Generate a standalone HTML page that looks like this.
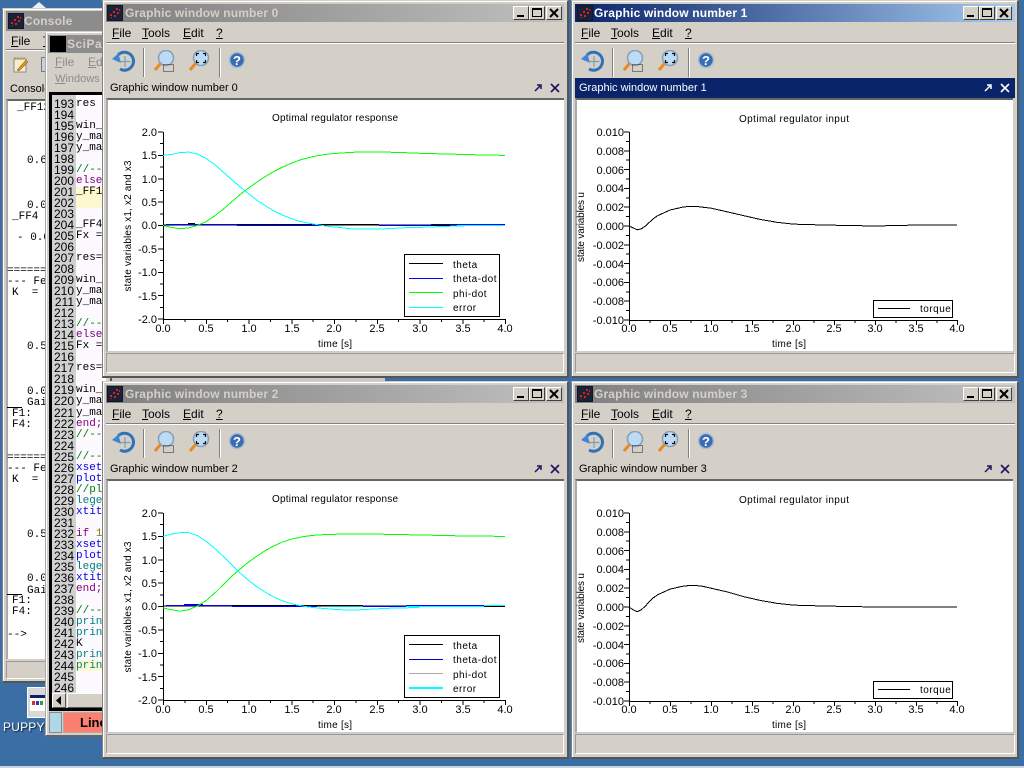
<!DOCTYPE html>
<html><head><meta charset="utf-8"><style>
html,body{margin:0;padding:0;width:1024px;height:768px;overflow:hidden;background:#3a6ea5}
*{box-sizing:border-box}
body{position:relative;font-family:"Liberation Sans",sans-serif;font-size:12px;color:#000}
.a{position:absolute;white-space:pre}
.w{position:absolute;background:#d4d0c8;border-top:1px solid #d4d0c8;border-left:1px solid #808080;border-right:2px solid #555;border-bottom:2px solid #555;box-shadow:inset 1px 1px 0 #fff}
.t{position:absolute;left:3px;top:3px;height:18px;background:linear-gradient(90deg,#808080,#c0c0c0)}
.t.on{background:linear-gradient(90deg,#0a246a,#a6caf0)}
.tt{position:absolute;left:19px;top:2px;font:bold 12px "Liberation Sans",sans-serif;letter-spacing:.15px;color:#d4d0c8;white-space:pre}
.on .tt{color:#fff}
.b{position:absolute;top:2px;width:16px;height:14px;background:#d4d0c8;border:1px solid;border-color:#fff #404040 #404040 #fff}
.m{position:absolute;top:25px;font-size:12px;white-space:pre}
.m u{text-decoration:underline}
.s1{position:absolute;top:41px;height:2px;background:linear-gradient(#808080 50%,#fff 50%)}
.s2{position:absolute;top:47px;width:2px;height:29px;background:linear-gradient(90deg,#808080 50%,#fff 50%)}
.d{position:absolute;left:3px;top:77px;height:20px;font-size:11px;line-height:20px;padding-left:4px;white-space:pre}
.d.on{background:#0a246a;color:#fff}
.c{position:absolute;left:3px;top:97px;height:254px;background:#fff;border-top:2px solid #666;border-left:2px solid #aaa;border-bottom:1px solid #ccc}
.st{position:absolute;left:3px;top:352px;height:20px;border:1px solid;border-color:#999 #fff #fff #999}
.n{position:absolute;left:52px;width:24px;text-align:right;padding-right:2px;font:12px/11px "Liberation Sans",sans-serif;height:11px;margin-top:2px}
.l{position:absolute;left:76px;font:11px/11px "Liberation Mono",monospace;height:11px;white-space:pre;margin-top:2px}
.n[style^="top:4"],.n[style^="top:5"],.n[style^="top:6"],.l[style^="top:4"],.l[style^="top:5"],.l[style^="top:6"]{margin-top:3px}
.o{position:absolute;left:0;font:11px/11px "Liberation Mono",monospace;white-space:pre}
svg text{font-family:"Liberation Sans",sans-serif}
</style></head><body>
<svg width="0" height="0" style="position:absolute"><defs>
<symbol id="ic" viewBox="0 0 16 16"><rect width="16" height="16" fill="#101828"/><rect x="1" y="1" width="14" height="14" fill="#1a2238"/><g fill="#e02020"><rect x="3" y="9" width="2" height="2"/><rect x="6" y="6" width="2" height="2"/><rect x="9" y="3" width="2" height="2"/><rect x="7" y="10" width="2" height="2"/><rect x="10" y="7" width="2" height="2"/><rect x="12" y="4" width="1" height="2"/><rect x="4" y="12" width="1" height="1"/></g></symbol>
<symbol id="undo" viewBox="0 0 24 22"><path d="M7 5A9 9 0 1 1 9 19" fill="none" stroke="#2f72b8" stroke-width="3"/><path d="M1 9L9 2L8 6L10 13Z" fill="#3c86d8"/><path d="M14 6V17M8.5 11.5H19.5" stroke="#7f9fb0" stroke-width="1.2"/></symbol>
<symbol id="z1" viewBox="0 0 24 24"><circle cx="13" cy="8" r="7.5" fill="#bcdcf6" stroke="#8aa0b8" stroke-width="1.6"/><path d="M7.5 13.5L2 20" stroke="#e88a20" stroke-width="3"/><rect x="10.5" y="14.5" width="10" height="7" fill="none" stroke="#222" stroke-dasharray="1 1"/></symbol>
<symbol id="z2" viewBox="0 0 24 24"><circle cx="13" cy="8" r="7.5" fill="#bcdcf6" stroke="#8aa0b8" stroke-width="1.6"/><path d="M7.5 13.5L2 20" stroke="#e88a20" stroke-width="3"/><path d="M8.5 6V3.5H11M15 3.5H17.5V6M17.5 10V12.5H15M11 12.5H8.5V10" fill="none" stroke="#111" stroke-width="1.2"/></symbol>
<symbol id="hp" viewBox="0 0 18 18"><circle cx="9" cy="9" r="7.5" fill="#3a6cb0" stroke="#a8bcd8" stroke-width="1.6"/><text x="9" y="14" text-anchor="middle" font-size="13" font-weight="bold" fill="#fff">?</text></symbol>
<symbol id="note" viewBox="0 0 16 16"><rect x="1" y="2" width="12" height="13" fill="#f6eec8" stroke="#888"/><path d="M2 2V0M5 2V0M8 2V0M11 2V0" stroke="#c08020"/><path d="M4 13L13 3L15 5L6 14Z" fill="#d89020" stroke="#705010" stroke-width=".5"/></symbol>
</defs></svg>

<!-- desktop bits -->
<div class="a" style="left:0;top:766px;width:1024px;height:2px;background:#cdd4dc"></div>
<svg class="a" style="left:31px;top:1px" width="16" height="8"><path d="M8 1L15 7H1Z" fill="#e8f0f8"/></svg>
<div class="a" style="left:102px;top:377px;width:283px;height:4px;background:#c8c8c8"></div>
<div class="a" style="left:27px;top:687px;width:20px;height:31px;background:#d8d8d4;border:1px solid #fff"></div>
<div class="a" style="left:30px;top:695px;width:16px;height:16px;background:linear-gradient(#0a246a 20%,#fff 20%)"></div>
<div class="a" style="left:32px;top:701px;width:3px;height:4px;background:#d03030"></div>
<div class="a" style="left:36px;top:701px;width:3px;height:4px;background:#3030d0"></div>
<div class="a" style="left:40px;top:701px;width:3px;height:4px;background:#30a030"></div>
<div class="a" style="left:3px;top:720px;font-size:12px;color:#fff;letter-spacing:.2px;text-shadow:1px 1px 1px #123">PUPPY2</div>

<!-- console -->
<div class="w" style="left:2px;top:8px;width:110px;height:675px">
 <div class="t" style="width:100px;top:2px;height:20px;background:#8c8c8c"></div>
 <svg class="a" style="left:5px;top:4px" width="16" height="16"><use href="#ic"/></svg>
 <div class="a" style="left:21px;top:5px;font:bold 12px 'Liberation Sans',sans-serif;letter-spacing:.15px;color:#d4d0c8">Console</div>
 <div class="m" style="left:8px;top:25px"><u>F</u>ile</div>
 <div class="m" style="left:40px;top:25px"><u>T</u>ools</div>
 <div class="s1" style="left:3px;width:100px;top:40px"></div>
 <svg class="a" style="left:10px;top:48px" width="16" height="16"><use href="#note"/></svg>
 <div class="a" style="left:38px;top:48px;width:10px;height:15px;background:#c8d0e0;border:1px solid #778"></div>
 <div class="a" style="left:7px;top:74px;font-size:11px">Console</div>
 <div class="a" style="left:3px;top:90px;width:100px;height:560px;background:#fff;border-top:2px solid #666;border-left:2px solid #aaa"></div>
 <div class="a" style="left:3px;top:652px;width:100px;height:18px;border:1px solid;border-color:#999 #fff #fff #999"></div>
</div>
<div class="o" style="left:17px;top:103px">_FF123</div>
<div class="o" style="left:27px;top:156px">0.62</div>
<div class="o" style="left:27px;top:201px">0.00</div>
<div class="o" style="left:12px;top:212px">_FF4  =</div>
<div class="o" style="left:17px;top:233px">- 0.00</div>
<div class="o" style="left:7px;top:266px">==========</div>
<div class="o" style="left:7px;top:277px">--- Feed</div>
<div class="o" style="left:12px;top:288px">K  =</div>
<div class="o" style="left:27px;top:342px">0.56</div>
<div class="o" style="left:27px;top:387px">0.00</div>
<div class="o" style="left:27px;top:398px">Gain</div>
<div class="a" style="left:7px;top:407px;width:15px;height:1px;background:#000"></div>
<div class="o" style="left:12px;top:409px">F1:</div>
<div class="o" style="left:12px;top:420px">F4:   -</div>
<div class="o" style="left:7px;top:453px">==========</div>
<div class="o" style="left:7px;top:464px">--- Feed</div>
<div class="o" style="left:12px;top:475px">K  =</div>
<div class="o" style="left:27px;top:530px">0.56</div>
<div class="o" style="left:27px;top:574px">0.00</div>
<div class="o" style="left:27px;top:586px">Gain</div>
<div class="a" style="left:7px;top:594px;width:15px;height:1px;background:#000"></div>
<div class="o" style="left:12px;top:596px">F1:</div>
<div class="o" style="left:12px;top:607px">F4:   -</div>
<div class="o" style="left:7px;top:630px">--&gt;</div>

<!-- scipad -->
<div class="a" style="left:45px;top:32px;width:60px;height:705px;background:#d4d0c8;border-left:1px solid #aaa;border-top:1px solid #fff;border-bottom:2px solid #666;box-shadow:inset 1px 0 0 #fff"></div>
<div class="a" style="left:48px;top:35px;width:57px;height:18px;background:#8c8c8c"></div>
<div class="a" style="left:50px;top:36px;width:16px;height:16px;background:#000"></div>
<div class="a" style="left:67px;top:37px;font:bold 12px 'Liberation Sans',sans-serif;letter-spacing:.5px;color:#d4d0c8">SciPad</div>
<div class="a" style="left:55px;top:55px;color:#8c8c8c"><u>F</u>ile</div>
<div class="a" style="left:88px;top:55px;color:#8c8c8c"><u>E</u>dit</div>
<div class="a" style="left:55px;top:73px;color:#8c8c8c;font-size:11px"><u>W</u>indows</div>
<div class="a" style="left:49px;top:92px;width:56px;height:619px;background:#000"></div>
<div class="a" style="left:52px;top:95px;width:24px;height:598px;background:#d0d0d0"></div>
<div class="a" style="left:76px;top:95px;width:29px;height:598px;background:#fdfaff"></div>
<div class="a" style="left:76px;top:187px;width:29px;height:21px;background:#fdf8d0"></div>
<div class="a" style="left:76px;top:660px;width:29px;height:11px;background:#fdf8d0"></div>
<div class="a" style="left:52px;top:693px;width:53px;height:15px;background:#d4d0c8"></div>
<div class="a" style="left:52px;top:693px;width:14px;height:15px;background:#d4d0c8;border:1px solid;border-color:#fff #555 #555 #fff"></div>
<svg class="a" style="left:55px;top:696px" width="8" height="10"><path d="M6 0V9L1 4.5Z" fill="#000"/></svg>
<div class="a" style="left:67px;top:693px;width:38px;height:15px;border:1px solid;border-color:#fff #555 #555 #fff"></div>
<div class="a" style="left:49px;top:712px;width:13px;height:21px;background:#add8e6;border:1px solid #889"></div>
<div class="a" style="left:63px;top:712px;width:42px;height:21px;background:#fa8072;border:1px solid #b8a8a0"></div>
<div class="a" style="left:80px;top:715px;font:bold 13px 'Liberation Sans',sans-serif">Line</div>
<div class="n" style="top:97px">193</div><div class="l" style="top:97px">res =</div>
<div class="n" style="top:108px">194</div>
<div class="n" style="top:119px">195</div><div class="l" style="top:119px">win_m</div>
<div class="n" style="top:130px">196</div><div class="l" style="top:130px">y_max</div>
<div class="n" style="top:141px">197</div><div class="l" style="top:141px">y_max</div>
<div class="n" style="top:152px">198</div>
<div class="n" style="top:163px">199</div><div class="l" style="top:163px;color:#008000">//---</div>
<div class="n" style="top:174px">200</div><div class="l" style="top:174px;color:#800080">else</div>
<div class="n" style="top:185px">201</div><div class="l" style="top:185px">_FF12</div>
<div class="n" style="top:196px">202</div>
<div class="n" style="top:207px">203</div>
<div class="n" style="top:218px">204</div><div class="l" style="top:218px">_FF4</div>
<div class="n" style="top:229px">205</div><div class="l" style="top:229px">Fx =</div>
<div class="n" style="top:240px">206</div>
<div class="n" style="top:251px">207</div><div class="l" style="top:251px">res=</div>
<div class="n" style="top:262px">208</div>
<div class="n" style="top:273px">209</div><div class="l" style="top:273px">win_m</div>
<div class="n" style="top:284px">210</div><div class="l" style="top:284px">y_max</div>
<div class="n" style="top:295px">211</div><div class="l" style="top:295px">y_max</div>
<div class="n" style="top:306px">212</div>
<div class="n" style="top:317px">213</div><div class="l" style="top:317px;color:#008000">//---</div>
<div class="n" style="top:328px">214</div><div class="l" style="top:328px;color:#800080">else</div>
<div class="n" style="top:339px">215</div><div class="l" style="top:339px">Fx =</div>
<div class="n" style="top:350px">216</div>
<div class="n" style="top:361px">217</div><div class="l" style="top:361px">res=</div>
<div class="n" style="top:372px">218</div>
<div class="n" style="top:383px">219</div><div class="l" style="top:383px">win_m</div>
<div class="n" style="top:394px">220</div><div class="l" style="top:394px">y_max</div>
<div class="n" style="top:405px">221</div><div class="l" style="top:405px">y_max</div>
<div class="n" style="top:416px">222</div><div class="l" style="top:416px;color:#800080">end;</div>
<div class="n" style="top:427px">223</div><div class="l" style="top:427px;color:#008000">//---</div>
<div class="n" style="top:438px">224</div>
<div class="n" style="top:449px">225</div><div class="l" style="top:449px;color:#008000">//---</div>
<div class="n" style="top:460px">226</div><div class="l" style="top:460px;color:#0000e0">xset</div>
<div class="n" style="top:471px">227</div><div class="l" style="top:471px;color:#0000e0">plot2</div>
<div class="n" style="top:482px">228</div><div class="l" style="top:482px;color:#008000">//plo</div>
<div class="n" style="top:493px">229</div><div class="l" style="top:493px;color:#008080">legen</div>
<div class="n" style="top:504px">230</div><div class="l" style="top:504px;color:#0000e0">xtit</div>
<div class="n" style="top:515px">231</div>
<div class="n" style="top:526px">232</div><div class="l" style="top:526px;color:#800080">if <span style="color:#808000">1</span></div>
<div class="n" style="top:537px">233</div><div class="l" style="top:537px;color:#0000e0">xset</div>
<div class="n" style="top:548px">234</div><div class="l" style="top:548px;color:#0000e0">plot2</div>
<div class="n" style="top:559px">235</div><div class="l" style="top:559px;color:#008080">legen</div>
<div class="n" style="top:570px">236</div><div class="l" style="top:570px;color:#0000e0">xtit</div>
<div class="n" style="top:581px">237</div><div class="l" style="top:581px;color:#800080">end;</div>
<div class="n" style="top:592px">238</div>
<div class="n" style="top:603px">239</div><div class="l" style="top:603px;color:#008000">//---</div>
<div class="n" style="top:614px">240</div><div class="l" style="top:614px;color:#008080">print</div>
<div class="n" style="top:625px">241</div><div class="l" style="top:625px;color:#008080">print</div>
<div class="n" style="top:636px">242</div><div class="l" style="top:636px">K</div>
<div class="n" style="top:647px">243</div><div class="l" style="top:647px;color:#008080">print</div>
<div class="n" style="top:658px">244</div><div class="l" style="top:658px;color:#008080">print</div>
<div class="n" style="top:669px">245</div>
<div class="n" style="top:680px">246</div>

<!-- window 0 -->
<div class="w" style="left:102px;top:0;width:467px;height:378px">
 <div class="t" style="width:458px"><div class="tt">Graphic window number 0</div>
  <div class="b" style="left:407px"><div class="a" style="left:3px;top:8px;width:7px;height:2px;background:#000"></div></div>
  <div class="b" style="left:423px"><div class="a" style="left:2px;top:1px;width:10px;height:9px;border:1px solid #000;border-top-width:2px"></div></div>
  <div class="b" style="left:440px"><svg class="a" style="left:2px;top:1px" width="10" height="10"><path d="M1 1L9 9M9 1L1 9" stroke="#000" stroke-width="2"/></svg></div>
 </div>
 <div class="m" style="left:9px"><u>F</u>ile</div><div class="m" style="left:39px"><u>T</u>ools</div><div class="m" style="left:80px"><u>E</u>dit</div><div class="m" style="left:113px"><u>?</u></div>
 <div class="s1" style="left:3px;width:458px"></div>
 <svg class="a" style="left:8px;top:49px" width="24" height="22"><use href="#undo"/></svg>
 <div class="s2" style="left:40px"></div><div class="s2" style="left:116px"></div>
 <svg class="a" style="left:50px;top:49px" width="24" height="24"><use href="#z1"/></svg>
 <svg class="a" style="left:85px;top:49px" width="24" height="24"><use href="#z2"/></svg>
 <svg class="a" style="left:125px;top:50px" width="18" height="18"><use href="#hp"/></svg>
 <div class="d" style="width:458px">Graphic window number 0<svg class="a" style="left:427px;top:5px" width="28" height="10"><path d="M2 8L7 3M4 2H8V6" stroke="#201060" stroke-width="1.5" fill="none"/><path d="M18 1L26 9M26 1L18 9" stroke="#201060" stroke-width="1.6"/></svg></div>
 <div class="c" style="width:458px"></div>
 <div class="st" style="width:458px"></div>
</div>
<!-- window 1 -->
<div class="w" style="left:571px;top:0;width:448px;height:378px">
 <div class="t on" style="width:440px"><div class="tt">Graphic window number 1</div>
  <div class="b" style="left:388px"><div class="a" style="left:3px;top:8px;width:7px;height:2px;background:#000"></div></div>
  <div class="b" style="left:404px"><div class="a" style="left:2px;top:1px;width:10px;height:9px;border:1px solid #000;border-top-width:2px"></div></div>
  <div class="b" style="left:421px"><svg class="a" style="left:2px;top:1px" width="10" height="10"><path d="M1 1L9 9M9 1L1 9" stroke="#000" stroke-width="2"/></svg></div>
 </div>
 <div class="m" style="left:9px"><u>F</u>ile</div><div class="m" style="left:39px"><u>T</u>ools</div><div class="m" style="left:80px"><u>E</u>dit</div><div class="m" style="left:113px"><u>?</u></div>
 <div class="s1" style="left:3px;width:440px"></div>
 <svg class="a" style="left:8px;top:49px" width="24" height="22"><use href="#undo"/></svg>
 <div class="s2" style="left:40px"></div><div class="s2" style="left:116px"></div>
 <svg class="a" style="left:50px;top:49px" width="24" height="24"><use href="#z1"/></svg>
 <svg class="a" style="left:85px;top:49px" width="24" height="24"><use href="#z2"/></svg>
 <svg class="a" style="left:125px;top:50px" width="18" height="18"><use href="#hp"/></svg>
 <div class="d on" style="width:440px">Graphic window number 1<svg class="a" style="left:408px;top:5px" width="28" height="10"><path d="M2 8L7 3M4 2H8V6" stroke="#fff" stroke-width="1.5" fill="none"/><path d="M18 1L26 9M26 1L18 9" stroke="#fff" stroke-width="1.6"/></svg></div>
 <div class="c" style="width:438px"></div>
 <div class="st" style="width:440px"></div>
</div>
<!-- window 2 -->
<div class="w" style="left:102px;top:381px;width:467px;height:378px">
 <div class="t" style="width:458px"><div class="tt">Graphic window number 2</div>
  <div class="b" style="left:407px"><div class="a" style="left:3px;top:8px;width:7px;height:2px;background:#000"></div></div>
  <div class="b" style="left:423px"><div class="a" style="left:2px;top:1px;width:10px;height:9px;border:1px solid #000;border-top-width:2px"></div></div>
  <div class="b" style="left:440px"><svg class="a" style="left:2px;top:1px" width="10" height="10"><path d="M1 1L9 9M9 1L1 9" stroke="#000" stroke-width="2"/></svg></div>
 </div>
 <div class="m" style="left:9px"><u>F</u>ile</div><div class="m" style="left:39px"><u>T</u>ools</div><div class="m" style="left:80px"><u>E</u>dit</div><div class="m" style="left:113px"><u>?</u></div>
 <div class="s1" style="left:3px;width:458px"></div>
 <svg class="a" style="left:8px;top:49px" width="24" height="22"><use href="#undo"/></svg>
 <div class="s2" style="left:40px"></div><div class="s2" style="left:116px"></div>
 <svg class="a" style="left:50px;top:49px" width="24" height="24"><use href="#z1"/></svg>
 <svg class="a" style="left:85px;top:49px" width="24" height="24"><use href="#z2"/></svg>
 <svg class="a" style="left:125px;top:50px" width="18" height="18"><use href="#hp"/></svg>
 <div class="d" style="width:458px">Graphic window number 2<svg class="a" style="left:427px;top:5px" width="28" height="10"><path d="M2 8L7 3M4 2H8V6" stroke="#201060" stroke-width="1.5" fill="none"/><path d="M18 1L26 9M26 1L18 9" stroke="#201060" stroke-width="1.6"/></svg></div>
 <div class="c" style="width:458px"></div>
 <div class="st" style="width:458px"></div>
</div>
<!-- window 3 -->
<div class="w" style="left:571px;top:381px;width:448px;height:378px">
 <div class="t" style="width:440px"><div class="tt">Graphic window number 3</div>
  <div class="b" style="left:388px"><div class="a" style="left:3px;top:8px;width:7px;height:2px;background:#000"></div></div>
  <div class="b" style="left:404px"><div class="a" style="left:2px;top:1px;width:10px;height:9px;border:1px solid #000;border-top-width:2px"></div></div>
  <div class="b" style="left:421px"><svg class="a" style="left:2px;top:1px" width="10" height="10"><path d="M1 1L9 9M9 1L1 9" stroke="#000" stroke-width="2"/></svg></div>
 </div>
 <div class="m" style="left:9px"><u>F</u>ile</div><div class="m" style="left:39px"><u>T</u>ools</div><div class="m" style="left:80px"><u>E</u>dit</div><div class="m" style="left:113px"><u>?</u></div>
 <div class="s1" style="left:3px;width:440px"></div>
 <svg class="a" style="left:8px;top:49px" width="24" height="22"><use href="#undo"/></svg>
 <div class="s2" style="left:40px"></div><div class="s2" style="left:116px"></div>
 <svg class="a" style="left:50px;top:49px" width="24" height="24"><use href="#z1"/></svg>
 <svg class="a" style="left:85px;top:49px" width="24" height="24"><use href="#z2"/></svg>
 <svg class="a" style="left:125px;top:50px" width="18" height="18"><use href="#hp"/></svg>
 <div class="d" style="width:440px">Graphic window number 3<svg class="a" style="left:408px;top:5px" width="28" height="10"><path d="M2 8L7 3M4 2H8V6" stroke="#201060" stroke-width="1.5" fill="none"/><path d="M18 1L26 9M26 1L18 9" stroke="#201060" stroke-width="1.6"/></svg></div>
 <div class="c" style="width:438px"></div>
 <div class="st" style="width:440px"></div>
</div>
<!-- title icons -->
<svg class="a" style="left:107px;top:5px" width="16" height="16"><use href="#ic"/></svg>
<svg class="a" style="left:577px;top:5px" width="16" height="16"><use href="#ic"/></svg>
<svg class="a" style="left:107px;top:386px" width="16" height="16"><use href="#ic"/></svg>
<svg class="a" style="left:577px;top:386px" width="16" height="16"><use href="#ic"/></svg>

<!-- plots -->
<svg class="a" style="left:0;top:0" width="1024" height="768" font-size="11" fill="#000">
<defs>
<path id="ax0" d="M163.5 132V319.5H505.5M163 132h-5M163 143.7h-3M163 155.4h-5M163 167h-3M163 178.8h-5M163 190.4h-3M163 202.1h-5M163 213.8h-3M163 225.5h-5M163 237.2h-3M163 248.9h-5M163 260.6h-3M163 272.3h-5M163 284h-3M163 295.6h-5M163 307.3h-3M163 319h-5M163.5 319v5M184.9 319v3M206.3 319v5M227.6 319v3M249 319v5M270.4 319v3M291.8 319v5M313.1 319v3M334.5 319v5M355.9 319v3M377.3 319v5M398.6 319v3M420 319v5M441.4 319v3M462.8 319v5M484.1 319v3M505.5 319v5" fill="none" stroke="#000"/>
<path id="ax1" d="M629.5 132V320.5H957.5M629 132h-5M629 141.4h-3M629 150.8h-5M629 160.2h-3M629 169.6h-5M629 179h-3M629 188.4h-5M629 197.8h-3M629 207.2h-5M629 216.6h-3M629 226h-5M629 235.4h-3M629 244.8h-5M629 254.2h-3M629 263.6h-5M629 273h-3M629 282.4h-5M629 291.8h-3M629 301.2h-5M629 310.6h-3M629 320h-5M629.5 320v5M650 320v3M670.5 320v5M691 320v3M711.5 320v5M732 320v3M752.5 320v5M773 320v3M793.5 320v5M814 320v3M834.5 320v5M855 320v3M875.5 320v5M896 320v3M916.5 320v5M937 320v3M957.5 320v5" fill="none" stroke="#000"/>
</defs>

<!-- plot 0 -->
<g shape-rendering="crispEdges">
<use href="#ax0"/>
<path d="M163 225H505" stroke="#000"/>
<g fill="#00f"><rect x="166" y="224" width="71" height="1"/><rect x="237" y="225" width="87" height="1"/><rect x="379" y="225" width="52" height="1"/><rect x="431" y="224" width="26" height="1" fill="#0000a0"/><rect x="457" y="224" width="48" height="1"/></g>
<g fill="#000"><rect x="188" y="223" width="7" height="1"/><rect x="237" y="224" width="87" height="1"/><rect x="324" y="224" width="55" height="1"/><rect x="431" y="225" width="26" height="1"/></g>
<rect x="457" y="225" width="48" height="1" fill="#0ff"/>
<g fill="none" stroke-width="1">
<polyline transform="translate(163,225.5) scale(85.5,-46.75)" vector-effect="non-scaling-stroke" stroke="#0f0" points="0,0 .1,-.04 .2,-.07 .3,-.05 .4,0 .5,.08 .6,.2 .7,.34 .8,.5 .9,.66 1,.8 1.1,.93 1.2,1.05 1.3,1.16 1.4,1.25 1.5,1.33 1.6,1.4 1.7,1.45 1.8,1.49 1.9,1.52 2,1.54 2.2,1.565 2.4,1.575 2.6,1.57 2.8,1.56 3,1.545 3.3,1.53 3.6,1.515 4,1.5"/>
<polyline transform="translate(163,225.5) scale(85.5,-46.75)" vector-effect="non-scaling-stroke" stroke="#0ff" points="0,1.5 .1,1.52 .2,1.56 .3,1.57 .4,1.53 .5,1.44 .6,1.31 .7,1.15 .8,.99 .9,.83 1,.68 1.1,.54 1.2,.42 1.3,.31 1.4,.22 1.5,.15 1.6,.09 1.7,.05 1.8,.02 1.9,-.01 2,-.03 2.2,-.07 2.4,-.08 2.6,-.07 2.8,-.05 3,-.04 3.3,-.02 3.6,0"/>
</g></g>
<text x="335" y="121" font-size="10" text-anchor="middle" textLength="126" lengthAdjust="spacing">Optimal regulator response</text>
<g text-anchor="end"><text x="157" y="136">2.0</text><text x="157" y="159">1.5</text><text x="157" y="183">1.0</text><text x="157" y="206">0.5</text><text x="157" y="229">0.0</text><text x="157" y="253">-0.5</text><text x="157" y="276">-1.0</text><text x="157" y="300">-1.5</text><text x="157" y="323">-2.0</text></g>
<g text-anchor="middle"><text x="163" y="332">0.0</text><text x="206" y="332">0.5</text><text x="249" y="332">1.0</text><text x="292" y="332">1.5</text><text x="334" y="332">2.0</text><text x="377" y="332">2.5</text><text x="420" y="332">3.0</text><text x="463" y="332">3.5</text><text x="505" y="332">4.0</text></g>
<text x="335" y="347" font-size="10" text-anchor="middle" textLength="34">time [s]</text>
<text transform="translate(131,226) rotate(-90)" font-size="10" text-anchor="middle" textLength="131">state variables x1, x2 and x3</text>
<g shape-rendering="crispEdges"><rect x="404.5" y="254.5" width="95" height="62" fill="#fff" stroke="#000"/>
<path d="M409 263.5H443" stroke="#000"/><path d="M409 278.5H443" stroke="#00f"/><path d="M409 292.5H443" stroke="#0f0"/><path d="M409 307.5H443" stroke="#0ff"/></g>
<g font-size="10" letter-spacing=".5"><text x="453" y="268">theta</text><text x="453" y="282">theta-dot</text><text x="453" y="297">phi-dot</text><text x="453" y="311">error</text></g>

<!-- plot 2 -->
<g shape-rendering="crispEdges" transform="translate(0,381)">
<use href="#ax0"/>
<path d="M163 225H505" stroke="#000"/>
<g fill="#00f"><rect x="166" y="224" width="66" height="1"/><rect x="184" y="223" width="19" height="1" fill="#0000c0"/><rect x="232" y="225" width="85" height="1"/><rect x="363" y="225" width="43" height="1"/><rect x="406" y="224" width="78" height="1"/></g>
<g fill="#000"><rect x="232" y="224" width="85" height="1"/><rect x="317" y="224" width="46" height="1"/><rect x="484" y="225" width="21" height="1"/></g>
<rect x="326" y="225" width="37" height="1" fill="#00c0c0"/><rect x="406" y="225" width="78" height="1" fill="#0ff"/><rect x="484" y="224" width="21" height="1" fill="#0ff"/>
<g fill="none">
<polyline transform="translate(163,225.5) scale(85.5,-46.75)" vector-effect="non-scaling-stroke" stroke="#0f0" points="0,-.03 .1,-.07 .2,-.1 .3,-.07 .4,.01 .5,.12 .6,.28 .7,.46 .8,.64 .9,.8 1,.95 1.1,1.08 1.2,1.2 1.3,1.3 1.4,1.38 1.5,1.44 1.6,1.48 1.7,1.51 1.8,1.53 2,1.545 2.3,1.55 2.6,1.545 3,1.53 3.5,1.51 4,1.5"/>
<polyline transform="translate(163,225.5) scale(85.5,-46.75)" vector-effect="non-scaling-stroke" stroke="#0ff" points="0,1.5 .1,1.55 .2,1.58 .3,1.58 .4,1.52 .5,1.4 .6,1.25 .7,1.08 .8,.9 .9,.72 1,.56 1.1,.42 1.2,.3 1.3,.2 1.4,.12 1.5,.06 1.6,.02 1.7,-.01 1.8,-.03 2,-.06 2.2,-.08 2.4,-.06 2.6,-.04 2.8,-.03 3,-.02"/>
</g></g>
<text x="335" y="502" font-size="10" text-anchor="middle" textLength="126">Optimal regulator response</text>
<g text-anchor="end"><text x="157" y="517">2.0</text><text x="157" y="540">1.5</text><text x="157" y="564">1.0</text><text x="157" y="587">0.5</text><text x="157" y="610">0.0</text><text x="157" y="634">-0.5</text><text x="157" y="657">-1.0</text><text x="157" y="681">-1.5</text><text x="157" y="704">-2.0</text></g>
<g text-anchor="middle"><text x="163" y="713">0.0</text><text x="206" y="713">0.5</text><text x="249" y="713">1.0</text><text x="292" y="713">1.5</text><text x="334" y="713">2.0</text><text x="377" y="713">2.5</text><text x="420" y="713">3.0</text><text x="463" y="713">3.5</text><text x="505" y="713">4.0</text></g>
<text x="335" y="728" font-size="10" text-anchor="middle" textLength="34">time [s]</text>
<text transform="translate(131,607) rotate(-90)" font-size="10" text-anchor="middle" textLength="131">state variables x1, x2 and x3</text>
<g shape-rendering="crispEdges"><rect x="404.5" y="635.5" width="95" height="62" fill="#fff" stroke="#000"/>
<path d="M409 644.5H443" stroke="#000"/><path d="M409 659.5H443" stroke="#00c"/><path d="M409 673.5H443" stroke="#aaa"/><path d="M409 688H443" stroke="#0ff" stroke-width="2"/></g>
<g font-size="10" letter-spacing=".5"><text x="453" y="649">theta</text><text x="453" y="663">theta-dot</text><text x="453" y="678">phi-dot</text><text x="453" y="692">error</text></g>

<!-- plot 1 -->
<g shape-rendering="crispEdges"><use href="#ax1"/>
<polyline fill="none" stroke="#000" transform="translate(629,226) scale(82,-9400)" vector-effect="non-scaling-stroke" points="0,0 .05,-.0002 .1,-.0004 .15,-.0003 .2,0 .25,.0004 .3,.0008 .35,.0011 .4,.0013 .45,.0015 .5,.0017 .55,.0018 .6,.0019 .65,.002 .7,.00205 .75,.0021 .8,.0021 .85,.00205 .9,.002 .95,.00195 1,.0019 1.1,.0017 1.2,.0015 1.3,.0013 1.4,.0011 1.5,.0009 1.6,.0007 1.7,.00055 1.8,.0004 1.9,.0003 2,.0002 2.2,.00015 2.4,.0001 2.7,.00005 3,0 3.25,.00005 3.5,.0001 4,.0001"/></g>
<text x="794" y="122" font-size="10" text-anchor="middle" textLength="110">Optimal regulator input</text>
<g text-anchor="end"><text x="624" y="136">0.010</text><text x="624" y="155">0.008</text><text x="624" y="174">0.006</text><text x="624" y="192">0.004</text><text x="624" y="211">0.002</text><text x="624" y="230">0.000</text><text x="624" y="249">-0.002</text><text x="624" y="268">-0.004</text><text x="624" y="286">-0.006</text><text x="624" y="305">-0.008</text><text x="624" y="324">-0.010</text></g>
<g text-anchor="middle"><text x="629" y="332">0.0</text><text x="670" y="332">0.5</text><text x="711" y="332">1.0</text><text x="752" y="332">1.5</text><text x="793" y="332">2.0</text><text x="834" y="332">2.5</text><text x="875" y="332">3.0</text><text x="916" y="332">3.5</text><text x="957" y="332">4.0</text></g>
<text x="789" y="347" font-size="10" text-anchor="middle" textLength="34">time [s]</text>
<text transform="translate(584,227) rotate(-90)" font-size="10" text-anchor="middle" textLength="70">state variables u</text>
<g shape-rendering="crispEdges"><rect x="873.5" y="300.5" width="79" height="17" fill="#fff" stroke="#000"/><path d="M878 308.5H910" stroke="#000"/></g>
<text x="920" y="312" font-size="10" letter-spacing=".5">torque</text>

<!-- plot 3 -->
<g shape-rendering="crispEdges" transform="translate(0,381)"><use href="#ax1"/>
<polyline fill="none" stroke="#000" transform="translate(629,226) scale(82,-9400)" vector-effect="non-scaling-stroke" points="0,0 .05,-.0003 .1,-.0005 .15,-.0003 .2,.0001 .25,.0006 .3,.001 .35,.0013 .4,.0015 .45,.0017 .5,.0019 .55,.002 .6,.0021 .65,.0022 .7,.00225 .75,.0023 .8,.0023 .85,.00225 .9,.0022 .95,.0021 1,.002 1.1,.0018 1.2,.0016 1.3,.00135 1.4,.0011 1.5,.0009 1.6,.0007 1.7,.00055 1.8,.0004 1.9,.0003 2,.0002 2.2,.00015 2.4,.0001 2.7,.00005 3,0 4,0"/></g>
<text x="794" y="503" font-size="10" text-anchor="middle" textLength="110">Optimal regulator input</text>
<g text-anchor="end"><text x="624" y="517">0.010</text><text x="624" y="536">0.008</text><text x="624" y="555">0.006</text><text x="624" y="573">0.004</text><text x="624" y="592">0.002</text><text x="624" y="611">0.000</text><text x="624" y="630">-0.002</text><text x="624" y="649">-0.004</text><text x="624" y="667">-0.006</text><text x="624" y="686">-0.008</text><text x="624" y="705">-0.010</text></g>
<g text-anchor="middle"><text x="629" y="713">0.0</text><text x="670" y="713">0.5</text><text x="711" y="713">1.0</text><text x="752" y="713">1.5</text><text x="793" y="713">2.0</text><text x="834" y="713">2.5</text><text x="875" y="713">3.0</text><text x="916" y="713">3.5</text><text x="957" y="713">4.0</text></g>
<text x="789" y="728" font-size="10" text-anchor="middle" textLength="34">time [s]</text>
<text transform="translate(584,608) rotate(-90)" font-size="10" text-anchor="middle" textLength="70">state variables u</text>
<g shape-rendering="crispEdges"><rect x="873.5" y="681.5" width="79" height="17" fill="#fff" stroke="#000"/><path d="M878 689.5H910" stroke="#000"/></g>
<text x="920" y="693" font-size="10" letter-spacing=".5">torque</text>
</svg>
</body></html>
